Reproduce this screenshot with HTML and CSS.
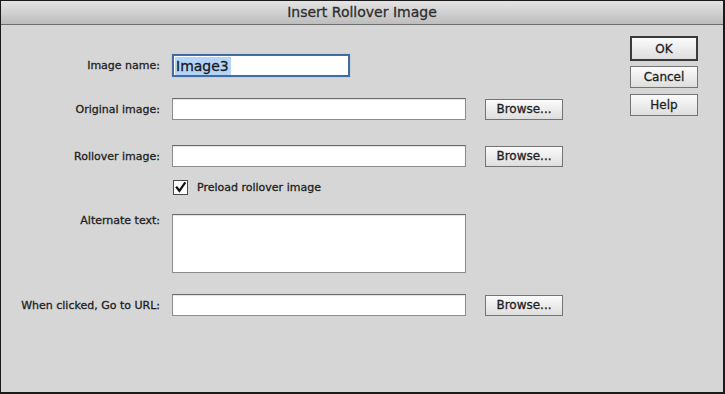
FILE: index.html
```html
<!DOCTYPE html>
<html lang="en">

<head>
    <meta charset="UTF-8">
    <meta name="viewport" content="width=device-width, initial-scale=1.0">
    <title>Insert Rollover Image</title>
    <link rel="stylesheet" href="styles.css">
</head>

<body>
    <div class="window">
        <div class="titlebar">Insert Rollover Image</div>

        <div class="content">
            <div class="form">
                <div class="row row-name">
                    <label class="label">Image name:</label>
                    <div class="field field-name"><span class="sel">Image3</span></div>
                </div>

                <div class="row row-original">
                    <label class="label">Original image:</label>
                    <div class="field"></div>
                    <button class="btn browse">Browse...</button>
                </div>

                <div class="row row-rollover">
                    <label class="label">Rollover image:</label>
                    <div class="field"></div>
                    <button class="btn browse">Browse...</button>
                </div>

                <div class="row row-check">
                    <span class="label"></span>
                    <span class="checkbox">
                        <svg width="14" height="14" viewBox="0 0 14 14">
                            <path d="M3 6.5 L5.8 10 L11.5 2" fill="none" stroke="#111" stroke-width="2.4" stroke-linecap="square"/>
                        </svg>
                    </span>
                    <span class="check-text">Preload rollover image</span>
                </div>

                <div class="row row-alt">
                    <label class="label">Alternate text:</label>
                    <div class="field area"></div>
                </div>

                <div class="row row-url">
                    <label class="label">When clicked, Go to URL:</label>
                    <div class="field"></div>
                    <button class="btn browse">Browse...</button>
                </div>
            </div>

            <div class="actions">
                <button class="btn action default">OK</button>
                <button class="btn action">Cancel</button>
                <button class="btn action">Help</button>
            </div>
        </div>
    </div>
</body>

</html>
```

FILE: styles.css
```css
body {
    margin: 0;
    font-family: "DejaVu Sans", "Liberation Sans", sans-serif;
    color: #1e1e1e;
    -webkit-text-stroke: 0.3px;
}

.window {
    width: 725px;
    height: 394px;
    box-sizing: border-box;
    background-color: #d6d6d6;
    border: 1px solid #1a1a1a;
    border-right-width: 2px;
    border-bottom-width: 2px;
}

.titlebar {
    height: 23px;
    line-height: 23px;
    text-align: center;
    font-size: 14px;
    color: #2e2e2e;
    background: linear-gradient(#e4e4e4, #bdbdbd);
    border-bottom: 1px solid #6e6e6e;
}

.content {
    display: flex;
    padding-top: 11px;
}

.form {
    display: flex;
    flex-direction: column;
    padding-top: 18px;
}

.row {
    display: flex;
    align-items: center;
}

.row-original {
    margin-top: 21px;
}

.row-rollover {
    margin-top: 25px;
}

.row-check {
    margin-top: 13px;
}

.row-alt {
    margin-top: 19px;
    align-items: flex-start;
}

.row-url {
    margin-top: 21px;
}

.label {
    width: 159px;
    margin-right: 12px;
    text-align: right;
    font-size: 11px;
    flex-shrink: 0;
}

.field {
    width: 292px;
    height: 20px;
    background-color: #fff;
    border: 1px solid #8c8c8c;
    border-top-color: #6a6a6a;
    box-shadow: inset 0 1px 1px rgba(0, 0, 0, 0.12);
}

.field-name {
    width: 173px;
    height: 19px;
    border: 2px solid #3f6ca3;
    box-shadow: 0 0 1px #7fa3d0;
    display: flex;
    align-items: center;
    padding-left: 1px;
}

.sel {
    background-color: #b4d4f8;
    font-size: 14px;
    line-height: 18px;
    padding: 0 2px 0 1px;
    color: #1a1a1a;
}

.area {
    height: 57px;
}

.btn {
    font-family: "DejaVu Sans", "Liberation Sans", sans-serif;
    font-size: 12px;
    color: #1e1e1e;
    background: linear-gradient(#fbfbfb, #dedede);
    border: 1px solid #747474;
    padding: 0;
    -webkit-text-stroke: 0.3px;
}

.browse {
    width: 78px;
    height: 21px;
    margin-left: 19px;
}

.checkbox {
    width: 13px;
    height: 13px;
    background-color: #fff;
    border: 1px solid #4a4a4a;
    display: flex;
    align-items: center;
    justify-content: center;
    margin-left: 1px;
}

.check-text {
    font-size: 11px;
    margin-left: 9px;
}

.actions {
    display: flex;
    flex-direction: column;
    gap: 6px;
    margin-left: auto;
    margin-right: 25px;
}

.action {
    width: 68px;
    height: 22px;
}

.default {
    height: 25px;
    border: 2px solid #3a3a3a;
    margin-bottom: -1px;
}
```
